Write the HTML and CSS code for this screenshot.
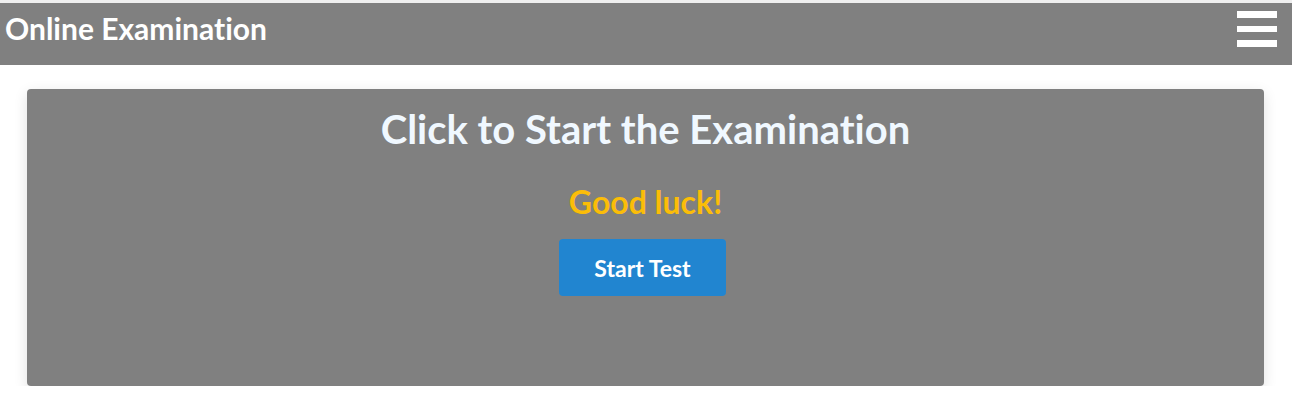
FILE: index.html
```html
<!DOCTYPE html>
<html>
<head>
<meta charset="utf-8">
<link rel="stylesheet" href="styles.css">
</head>
<body>
<header class="topbar">
  <h1 class="brand">Online Examination</h1>
  <button class="menu" aria-label="Menu">
    <svg width="40" height="36" viewBox="0 0 40 36"><rect x="0" y="0" width="40" height="7" fill="#fff"/><rect x="0" y="15" width="40" height="6" fill="#fff"/><rect x="0" y="29" width="40" height="7" fill="#fff"/></svg>
  </button>
</header>
<main class="wrap">
  <section class="card">
    <h2 class="card-title">Click to Start the Examination</h2>
    <p class="luck">Good luck!</p>
    <button class="start">Start Test</button>
  </section>
</main>
</body>
</html>
```
FILE: styles.css
```css
html, body { margin: 0; padding: 0; }
html { background: #fff; }
body {
  background: #fff;
  font-family: Lato, "Liberation Sans", sans-serif;
  font-variant-ligatures: none;
  padding-top: 3px;
}
.topbar {
  height: 62px;
  background: #808080;
  display: flex;
  align-items: center;
  justify-content: space-between;
  padding: 0 15px 0 5px;
  box-shadow: 0 -3px 0 #efefef;
}
.brand {
  margin: 0;
  color: #fff;
  font-size: 30px;
  font-weight: 700;
  line-height: 1;
  padding-bottom: 12px;
}
.menu {
  background: none;
  border: 0;
  padding: 0;
  display: flex;
  margin-top: -11px;
}
.wrap {
  padding: 24px 28px 0 27px;
}
.card {
  background: #808080;
  border-radius: 4px;
  box-shadow: 0 4px 14px rgba(0,0,0,0.12);
  height: 297px;
  box-sizing: border-box;
  display: flex;
  flex-direction: column;
  align-items: center;
  padding-top: 16px;
}
.card-title {
  margin: 0;
  color: #f0f8ff;
  font-size: 40px;
  font-weight: 700;
  line-height: 48px;
}
.luck {
  margin: 30px 0 0;
  color: #fbbd08;
  font-size: 32px;
  font-weight: 700;
  line-height: 38px;
}
.start {
  margin: 18px 6px 0 0;
  width: 167px;
  height: 57px;
  background: #2185d0;
  color: #fff;
  border: 0;
  border-radius: 4px;
  font-family: Lato, "Liberation Sans", sans-serif;
  font-variant-ligatures: none;
  font-size: 23px;
  font-weight: 700;
  padding: 0;
}
```
